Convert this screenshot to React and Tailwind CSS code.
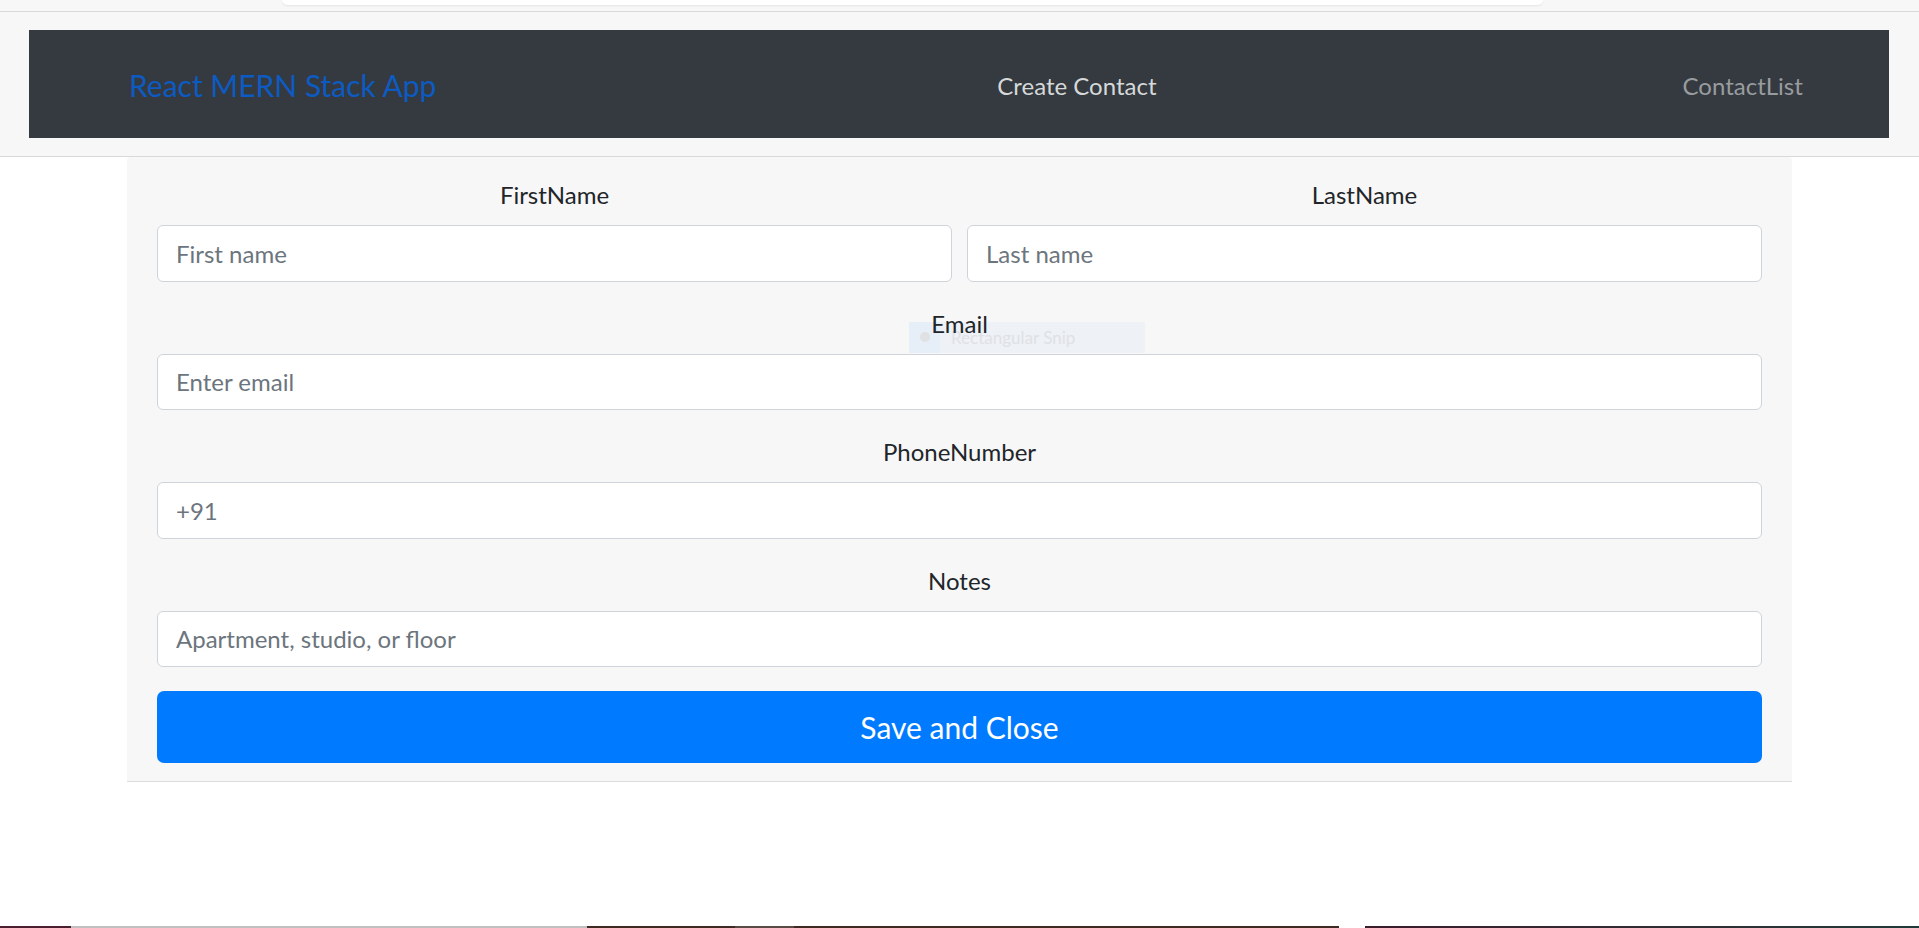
import React from "react";

const Field = ({ label, placeholder, className = "", children }) => (
  <div className={"relative flex flex-col " + className}>
    <label className="relative z-10 mb-[12px] text-center text-[24px] leading-[36px] text-[#212529]">
      {label}
    </label>
    {children}
    <input
      type="text"
      placeholder={placeholder}
      className="h-[56.5px] w-full rounded-[6px] border border-[#ced4da] bg-white px-[18px] text-[24px] text-[#495057] outline-none placeholder:text-[#6c757d]"
    />
  </div>
);

const App = () => {
  return (
    <div className="flex h-screen flex-col overflow-hidden bg-white font-['Lato','Liberation_Sans',sans-serif]">
      <header className="bg-[#f7f7f7]">
        <div className="h-[11px]">
          <div className="ml-[282px] h-[5px] w-[1261px] rounded-b-[6px] bg-white shadow-[0_1px_2px_rgba(0,0,0,0.08)]"></div>
        </div>
        <div className="border-y border-[#d9d9d9] pt-[18px] pb-[18px]">
          <nav className="ml-[29px] flex h-[108px] w-[1860px] items-center bg-[#343a40] pt-[3px]">
            <a className="ml-[100px] text-[30px] leading-[45px] text-[#0d5ac2]">React MERN Stack App</a>
            <a className="ml-[561px] text-[24px] leading-[36px] text-[#d6d8d9]">Create Contact</a>
            <a className="ml-[526px] text-[24px] leading-[36px] text-[#999c9f]">ContactList</a>
          </nav>
        </div>
      </header>

      <main className="ml-[127px] w-[1665px] rounded-t-[4px] border-b border-[#dcdcdc] bg-[#f7f7f7] px-[30px] pt-[20px] pb-[18px]">
        <div className="grid grid-cols-2 gap-x-[15px]">
          <Field label="FirstName" placeholder="First name" />
          <Field label="LastName" placeholder="Last name" />
        </div>
        <Field label="Email" placeholder="Enter email" className="mt-[24px]">
          <div className="absolute top-[16px] left-[752px] flex h-[31px] w-[236px] items-center bg-[#eef1f6]">
            <div className="flex h-full w-[31px] items-center justify-center bg-[#e6eef8]">
              <span className="h-[10px] w-[10px] rounded-full bg-[#e0e1e3]"></span>
            </div>
            <span className="ml-[11px] text-[17px] leading-none text-[#dfe1e5]">Rectangular Snip</span>
          </div>
        </Field>
        <Field label="PhoneNumber" placeholder="+91" className="mt-[24px]" />
        <Field label="Notes" placeholder="Apartment, studio, or floor" className="mt-[24px]" />
        <button className="mt-[24px] h-[72px] w-full rounded-[7px] bg-[#007bff] text-[30px] leading-[45px] text-white">
          Save and Close
        </button>
      </main>

      <div className="mt-auto flex h-[2px]">
        <div className="w-[71px] bg-[#4a2030]"></div>
        <div className="w-[516px] bg-[#c0c0c0]"></div>
        <div className="w-[148px] bg-[#3e2a22]"></div>
        <div className="w-[59px] bg-[#5a4a45]"></div>
        <div className="w-[545px] bg-[#3e2a22]"></div>
        <div className="w-[26px] bg-white"></div>
        <div className="flex-1 bg-gradient-to-r from-[#3a1c2a] to-[#1f3a3a]"></div>
      </div>
    </div>
  );
};

export default App;
